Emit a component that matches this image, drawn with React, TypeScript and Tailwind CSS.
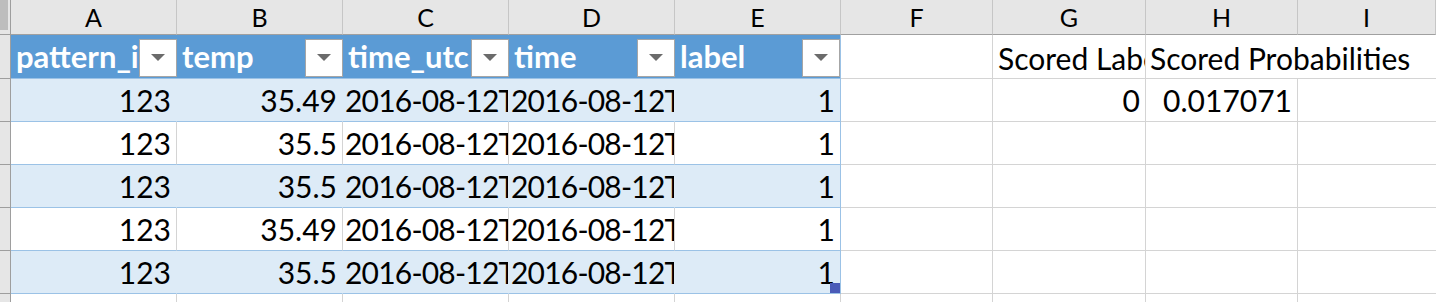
import React from "react";

const colWidths = ["w-[166px]", "w-[166px]", "w-[166px]", "w-[166px]", "w-[166px]", "w-[152px]", "w-[153px]", "w-[152px]"];
const letters = ["A", "B", "C", "D", "E", "F", "G", "H", "I"];
const headers = ["pattern_id", "temp", "time_utc", "time", "label"];

const rows: string[][] = [
  ["123", "35.49", "2016-08-12T10:02:11Z", "2016-08-12T10:02:11", "1"],
  ["123", "35.5", "2016-08-12T10:02:12Z", "2016-08-12T10:02:12", "1"],
  ["123", "35.5", "2016-08-12T10:02:13Z", "2016-08-12T10:02:13", "1"],
  ["123", "35.49", "2016-08-12T10:02:14Z", "2016-08-12T10:02:14", "1"],
  ["123", "35.5", "2016-08-12T10:02:15Z", "2016-08-12T10:02:15", "1"],
];

function FilterButton() {
  return (
    <div className="w-[38px] h-[38px] shrink-0 bg-white border border-[#a6a6a6] flex items-center justify-center mb-px">
      <svg width="14" height="8" viewBox="0 0 14 8">
        <path d="M0 0 L14 0 L7 7 Z" fill="#6b6b6b" />
      </svg>
    </div>
  );
}

function RowHead({ h }: { h: string }) {
  return <div className={`w-[11px] shrink-0 ${h} bg-[#e6e6e6] border-r border-b border-[#9e9e9e]`} />;
}

export default function App() {
  return (
    <div className="w-[1436px] h-[302px] overflow-hidden bg-white text-black font-['Lato',sans-serif]">
      {/* column letters */}
      <div className="flex h-[35px]">
        <div className="w-[11px] shrink-0 bg-[#e6e6e6] border-r border-b border-[#9e9e9e]">
          <div className="w-[8px] h-[30px] bg-[#bdbdbd]" />
        </div>
        {letters.map((l, i) => (
          <div
            key={l}
            className={`${colWidths[i] ?? "flex-1"} shrink-0 bg-[#e6e6e6] border-r border-b border-r-[#c6c6c6] border-b-[#a0a0a0] flex items-center justify-center text-[25px] leading-none pt-[1px]`}
          >
            {l}
          </div>
        ))}
      </div>

      {/* table header row */}
      <div className="flex h-[44px]">
        <RowHead h="h-[44px]" />
        {headers.map((t, i) => (
          <div
            key={t}
            className={`${colWidths[i]} shrink-0 bg-[#5b9bd5] border-b ${i === 4 ? "border-r border-r-[#9bc2e6]" : ""} border-b-[#9bc2e6] flex items-end`}
          >
            <div className="flex-1 min-w-0 overflow-hidden whitespace-nowrap text-white font-bold text-[31px] leading-none pl-[5px] pb-[6px]">
              {t}
            </div>
            <FilterButton />
          </div>
        ))}
        <div className="w-[152px] shrink-0 border-r border-b border-[#d4d4d4]" />
        <div className="w-[153px] shrink-0 border-r border-b border-[#d4d4d4] overflow-hidden whitespace-nowrap flex items-end text-[30px] leading-none pl-[5px] pb-[5px]">
          Scored Label
        </div>
        <div className="w-[152px] shrink-0 border-b border-[#d4d4d4] whitespace-nowrap flex items-end text-[30px] leading-none pl-[4px] pb-[5px] relative z-10">
          Scored Probabilities
        </div>
        <div className="flex-1 border-b border-[#d4d4d4]" />
      </div>

      {/* data rows */}
      {rows.map((r, ri) => {
        const banded = ri % 2 === 0;
        return (
          <div key={ri} className="flex h-[43px]">
            <RowHead h="h-[43px]" />
            {r.map((v, ci) => {
              const isNum = ci === 0 || ci === 1 || ci === 4;
              const edge = ci === 4 ? "border-r-[#9bc2e6]" : banded ? "border-r-[#ddebf7]" : "border-r-[#d4d4d4]";
              return (
                <div
                  key={ci}
                  className={`${colWidths[ci]} shrink-0 relative border-r border-b border-b-[#9bc2e6] ${edge} ${banded ? "bg-[#ddebf7]" : "bg-white"} overflow-hidden whitespace-nowrap flex items-end ${isNum ? "justify-end pr-[5px]" : "pl-[2px] tracking-[-0.8px]"} text-[30px] leading-none pb-[6px]`}
                >
                  {v}
                  {ri === rows.length - 1 && ci === 4 && (
                    <div className="absolute right-0 bottom-0 w-[10px] h-[10px] bg-[#4a5bb8]" />
                  )}
                </div>
              );
            })}
            <div className="w-[152px] shrink-0 border-r border-b border-[#d4d4d4]" />
            <div className="w-[153px] shrink-0 border-r border-b border-[#d4d4d4] flex items-end justify-end text-[30px] leading-none pr-[5px] pb-[6px]">
              {ri === 0 ? "0" : ""}
            </div>
            <div className="w-[152px] shrink-0 border-r border-b border-[#d4d4d4] flex items-end justify-end text-[30px] leading-none pr-[5px] pb-[6px]">
              {ri === 0 ? "0.017071" : ""}
            </div>
            <div className="flex-1 border-b border-[#d4d4d4]" />
          </div>
        );
      })}

      {/* empty row below the table */}
      <div className="flex h-[43px]">
        <RowHead h="h-[43px]" />
        {colWidths.map((w, i) => (
          <div key={i} className={`${w} shrink-0 border-r border-b border-[#d4d4d4]`} />
        ))}
        <div className="flex-1 border-b border-[#d4d4d4]" />
      </div>
    </div>
  );
}
